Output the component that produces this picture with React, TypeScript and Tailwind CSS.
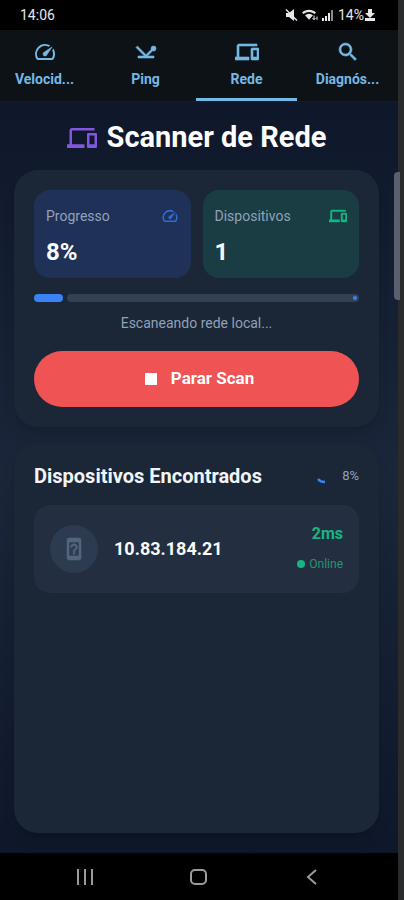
import { useState } from 'react';
import type { IconType } from 'react-icons';
import {
  MdDeviceUnknown,
  MdDevices,
  MdNetworkPing,
  MdOutlineSpeed,
  MdSearch,
  MdStop,
} from 'react-icons/md';

interface Tab { id: string; label: string; icon: IconType; }
interface Device { ip: string; latency: number; }

const TABS: Tab[] = [
  { id: 'velocidade', label: 'Velocid...', icon: MdOutlineSpeed },
  { id: 'ping', label: 'Ping', icon: MdNetworkPing },
  { id: 'rede', label: 'Rede', icon: MdDevices },
  { id: 'diagnostico', label: 'Diagnós...', icon: MdSearch },
];

const DEVICES: Device[] = [{ ip: '10.83.184.21', latency: 2 }];

function StatusBar() {
  return (
    <div className="flex h-[30px] shrink-0 items-center justify-between bg-black pl-5 pr-[22px] text-sm text-gray-200">
      <span>14:06</span>
      <div className="flex items-center gap-1">
        <svg className="h-3.5 w-3.5" viewBox="0 0 14 14" fill="currentColor">
          <path d="M2 5h3l5-4v12L5 9H2z" />
          <path d="M2 1.500 13 12.500" stroke="currentColor" strokeWidth="1.500" />
        </svg>
        <svg className="h-3.5 w-4" viewBox="0 0 16 14" fill="currentColor">
          <path d="M0 4.500C4 .8 10 .8 14 4.500l-1.500 1.600C9.300 3.300 4.700 3.300 1.500 6.100z" />
          <path d="M3 7.300c2.500-2 5.500-2 8 0L7 11.800z" />
          <path d="M12 7.500v4m-1.500-1.500 1.500 1.800 1.500-1.800M15 12V8.500" stroke="currentColor" strokeWidth="1" fill="none" />
        </svg>
        <svg className="h-3 w-3" viewBox="0 0 12 12" fill="currentColor">
          <path d="M0 9h2v3H0zM3 7h2v5H3zM6 4h2v8H6z" />
          <path d="M9 1h2v11H9z" opacity=".6" />
        </svg>
        <div className="flex items-center">
          <span>14%</span>
          <svg className="h-3 w-3" viewBox="0 0 12 12" fill="currentColor">
            <path d="M4 0h4v4h3L6 9 1 4h3zM1 9h10v3H1z" />
          </svg>
        </div>
      </div>
    </div>
  );
}

function StatCard({ label, value, icon: Icon, className, iconClass }: {
  label: string; value: string; icon: IconType; className: string; iconClass: string;
}) {
  return (
    <div className={`flex h-[88px] flex-1 flex-col justify-between rounded-2xl px-3 pb-2.5 pt-4 ${className}`}>
      <div className="flex items-center justify-between">
        <span className="text-sm leading-5 text-slate-400">{label}</span>
        <Icon className={`h-[18px] w-[18px] [&>path:last-child]:stroke-[0.6] ${iconClass}`} />
      </div>
      <span className="text-2xl font-bold text-slate-50">{value}</span>
    </div>
  );
}

export default function App() {
  const [activeTab, setActiveTab] = useState('rede');
  const progress = 8;

  return (
    <div className="flex min-h-screen bg-[#292b2d] pr-[6px] font-[Roboto,sans-serif]">
      <div className="relative flex flex-1 flex-col bg-[#0f172a]">
        <StatusBar />

        <div className="shrink-0 overflow-hidden border-b border-[#171b2c] bg-[#0d1217]">
          {/* the tab strip is scrolled slightly past its left edge */}
          <nav className="-ml-1.5 flex h-[71px]">
            {TABS.map(({ id, label, icon: Icon }) => (
              <button
                key={id}
                onClick={() => setActiveTab(id)}
                className={`flex flex-1 flex-col items-center gap-1 border-b-[3px] pt-2.5 text-[#74b8e4] ${
                  activeTab === id ? 'border-[#74b8e4]' : 'border-transparent'
                }`}
              >
                <Icon className="h-6 w-6 [&>path:last-child]:stroke-[0.6]" />
                <span className="text-sm font-bold leading-[22px]">{label}</span>
              </button>
            ))}
          </nav>
        </div>

        <main className="flex flex-1 flex-col bg-linear-to-b from-[#0f172a] via-[#1b263a] to-[#0f172a] pb-5 pl-3.5 pr-[19px]">
          <h1 className="flex h-[68px] items-center justify-center gap-2.5 pt-1 text-[29px] font-bold text-white">
            <MdDevices className="h-[30px] w-[30px] text-[#8257e0]" />
            Scanner de Rede
          </h1>

          <section className="rounded-3xl bg-[#1b2636] p-5 shadow-lg shadow-black/10">
            <div className="flex gap-3">
              <StatCard label="Progresso" value={`${progress}%`} icon={MdOutlineSpeed} className="bg-[#203157]" iconClass="text-[#2d6bd8]" />
              <StatCard label="Dispositivos" value="1" icon={MdDevices} className="bg-[#1a3c43]" iconClass="text-[#10b981]" />
            </div>

            <div className="mt-4 flex h-2 gap-1" role="progressbar" aria-label="Progresso" aria-valuenow={progress}>
              <div className="rounded-full bg-[#3b82f6]" style={{ width: `${progress + 1}%` }} />
              <div className="flex flex-1 items-center justify-end rounded-full bg-[#334155] pr-0.5">
                <span className="h-1 w-1 rounded-full bg-[#3b82f6]" />
              </div>
            </div>
            <p className="mt-[11px] text-center text-sm leading-5 text-slate-400">Escaneando rede local...</p>

            <button className="mt-[18px] flex h-14 w-full items-center justify-center gap-2 rounded-full bg-[#ef5354] text-[17px] font-bold text-white">
              <MdStop className="h-6 w-6" />
              Parar Scan
            </button>
          </section>

          <section className="mt-4 flex-1 rounded-3xl bg-[#1b2636] px-5 pb-5 pt-[19px] shadow-lg shadow-black/15">
            <div className="flex h-7 items-center justify-between">
              <h2 className="text-xl font-bold text-slate-100">Dispositivos Encontrados</h2>
              <div className="flex items-center gap-3 text-[13px] text-slate-400">
                <svg className="h-4 w-4" viewBox="0 0 16 16" fill="none">
                  <path d="M4 11c1.500 2 3.500 3 7 3" stroke="#3b82f6" strokeWidth="2.500" />
                </svg>
                {progress}%
              </div>
            </div>

            <ul className="mt-[15px]">
              {DEVICES.map(d => (
                <li key={d.ip} className="flex h-[88px] items-center gap-4 rounded-2xl bg-[#232f40] px-4">
                  <div className="flex h-12 w-12 items-center justify-center rounded-full bg-[#2c3b4f]">
                    <MdDeviceUnknown className="h-6 w-6 text-[#53657d] [&>path:last-child]:stroke-[0.6]" />
                  </div>
                  <span className="flex-1 text-lg font-bold text-slate-50">{d.ip}</span>
                  <div className="flex flex-col items-end gap-2.5">
                    <span className="text-base font-bold leading-5 text-[#18b584]">{d.latency}ms</span>
                    <span className="flex items-center gap-1 text-xs leading-5 text-[#299570]">
                      <span className="h-2 w-2 rounded-full bg-[#18b584]" />
                      Online
                    </span>
                  </div>
                </li>
              ))}
            </ul>
          </section>
        </main>

        <div className="flex h-[47px] shrink-0 items-center justify-around bg-black px-7 text-[#9b9b9b]">
          <button aria-label="Recentes">
            <svg className="h-5 w-5" viewBox="0 0 20 20" stroke="currentColor" strokeWidth="2">
              <path d="M3 2v16M10 2v16M17 2v16" />
            </svg>
          </button>
          <button aria-label="Início">
            <svg className="h-5 w-5" viewBox="0 0 20 20" stroke="currentColor" strokeWidth="2" fill="none">
              <rect x="2" y="3" width="15" height="14" rx="4" />
            </svg>
          </button>
          <button aria-label="Voltar">
            <svg className="h-5 w-5" viewBox="0 0 20 20" stroke="currentColor" strokeWidth="2" fill="none">
              <path d="M13 3 5 10l8 7" />
            </svg>
          </button>
        </div>

        <div className="absolute -right-0.5 top-[172px] h-[128px] w-1.5 rounded-l bg-[#5b6070]" />
      </div>
    </div>
  );
}
